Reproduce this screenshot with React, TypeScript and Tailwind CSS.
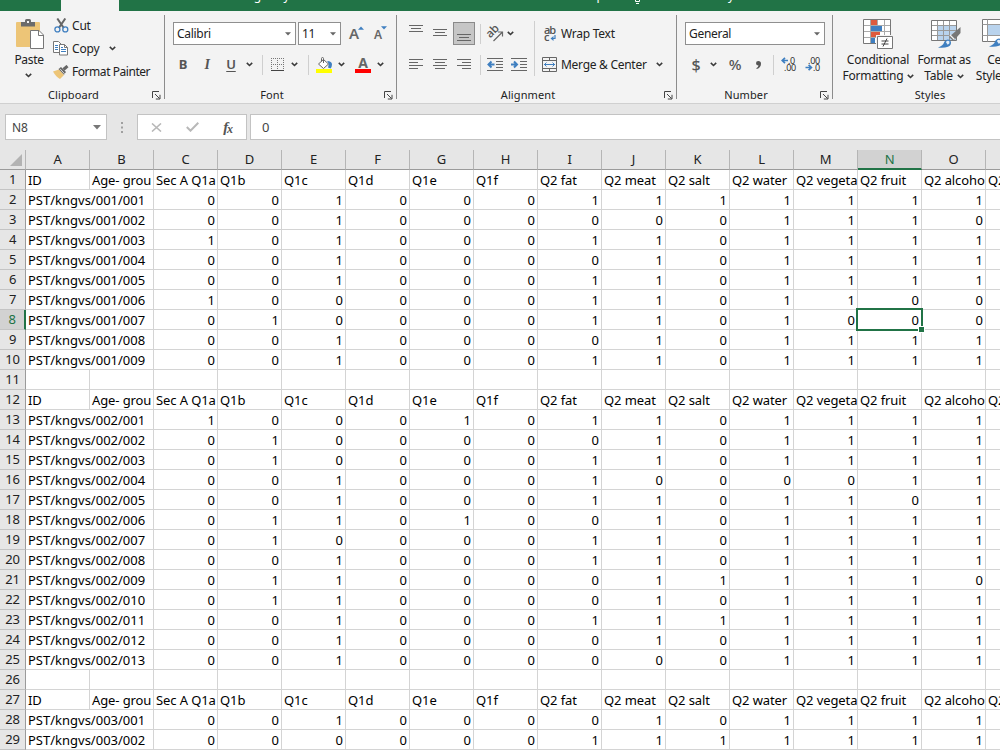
import type { ReactNode } from 'react';

const COLUMNS = ['A', 'B', 'C', 'D', 'E', 'F', 'G', 'H', 'I', 'J', 'K', 'L', 'M', 'N', 'O', 'P'];

const HEADINGS = [
  'ID', 'Age- grou', 'Sec A Q1a', 'Q1b', 'Q1c', 'Q1d', 'Q1e', 'Q1f',
  'Q2 fat', 'Q2 meat', 'Q2 salt', 'Q2 water', 'Q2 vegeta', 'Q2 fruit', 'Q2 alcoho', 'Q2',
];

type SheetRow =
  | { kind: 'heading' }
  | { kind: 'blank' }
  | { kind: 'data'; id: string; answers: string };

const heading: SheetRow = { kind: 'heading' };
const blank: SheetRow = { kind: 'blank' };

/** Builds the numbered rows of one village; each string holds the answers for C to O. */
function block(village: string, answers: string[]): SheetRow[] {
  return answers.map((a, i) => ({
    kind: 'data',
    id: `PST/kngvs/${village}/${String(i + 1).padStart(3, '0')}`,
    answers: a,
  }));
}

const ROWS: SheetRow[] = [
  heading,
  ...block('001', [
    '0010001111111',
    '0010000001110',
    '1010001101111',
    '0010000101111',
    '0010001101111',
    '1000001101100',
    '0100001101000',
    '0010000101111',
    '0010001101111',
  ]),
  blank,
  heading,
  ...block('002', [
    '1000101101111',
    '0100000101111',
    '0100001101111',
    '0010001000011',
    '0010001101101',
    '0110100101111',
    '0100001101111',
    '0010001101111',
    '0110000111110',
    '0110000101111',
    '0010001111111',
    '0010000101111',
    '0010000001111',
  ]),
  blank,
  heading,
  ...block('003', ['0010000101111', '0000001111111']),
];

const ACTIVE_COLUMN = 13;
const ACTIVE_ROW = 8;

function Chevron(): JSX.Element {
  return (
    <svg width="7" height="5" viewBox="0 0 7 5" fill="none" stroke="#3a3a3a" strokeWidth="1.6">
      <path d="M0.8 0.9 3.5 3.5 6.2 0.9" />
    </svg>
  );
}

function Triangle({ className = 'fill-[#666]' }: { className?: string }): JSX.Element {
  return (
    <svg className={className} width="6" height="4" viewBox="0 0 6 4">
      <path d="M0 0.3h6L3 3.6z" />
    </svg>
  );
}

function Launcher(): JSX.Element {
  return (
    <svg width="9" height="9" viewBox="0 0 9 9" fill="none" stroke="#444">
      <path d="M0.5 7V0.5H7M3 3l4.5 4.5M8 3.8V8H3.8" />
    </svg>
  );
}

/** Paragraph-style lines, given as [x1, x2, y]. */
function Lines({ rows }: { rows: number[][] }): JSX.Element {
  return (
    <svg width="14" height="23" viewBox="0 0 14 23" stroke="#666">
      {rows.map(([x1, x2, y]) => (
        <path key={y} d={`M${x1} ${y}H${x2}`} />
      ))}
    </svg>
  );
}

function PasteIcon(): JSX.Element {
  return (
    <svg width="29" height="31" viewBox="0 0 29 31">
      <rect x="0" y="3" width="24" height="25" rx="1" fill="#edc577" />
      <path d="M5 3h4V1.6Q9 0 10.5 0h3Q15 0 15 1.6V3h4v4.5H5z" fill="#6b6b6b" />
      <rect x="11" y="2" width="2" height="2" fill="#f3f3f3" />
      <path d="M14.5 11.5h8.500l4.500 4.500v13.500h-13z" fill="#fff" stroke="#777" />
      <path d="M22.5 11.5v5h5" fill="none" stroke="#777" />
    </svg>
  );
}

function CutIcon(): JSX.Element {
  return (
    <svg width="15" height="15" viewBox="0 0 15 15" fill="none">
      <path d="M3.3 0.5 9.8 10M11.3 0.5 4.8 10" stroke="#666" strokeWidth="2" />
      <circle cx="3.4" cy="11.4" r="2.500" stroke="#3f7fc0" strokeWidth="1.3" />
      <circle cx="11.3" cy="11.4" r="2.500" stroke="#3f7fc0" strokeWidth="1.3" />
    </svg>
  );
}

function CopyIcon(): JSX.Element {
  return (
    <svg width="15" height="15" viewBox="0 0 15 15" fill="#fff" stroke="#777">
      <path d="M0.5 0.5h5l2.500 2.500v8.500H0.5z" />
      <path d="M2 4.5h3M2 6.5h3M2 8.5h3" stroke="#3f7fc0" />
      <path d="M6.5 3.5h5l3 3v7.500h-8z" />
      <path d="M11.5 3.5v3h3" fill="none" />
      <path d="M8 8.5h5M8 10.5h5M8 6.5h2" stroke="#3f7fc0" />
    </svg>
  );
}

function BrushIcon(): JSX.Element {
  return (
    <svg width="16" height="14" viewBox="0 0 16 14">
      <path d="M0 6.5 6 4.5l5 5.500-4 4Q3 12 0 6.5z" fill="#edc577" />
      <path d="M5.5 4 8 2l5 5-2 2.800z" fill="#666" />
      <path d="m10.5 4.5 4-3.500" stroke="#666" strokeWidth="3" />
      <path d="m7 3.8 4.600 5" stroke="#f3f3f3" strokeWidth=".8" />
    </svg>
  );
}

function FillIcon(): JSX.Element {
  return (
    <svg width="16" height="16" viewBox="0 0 16 16" fill="none">
      <path d="M11 4q5 0 5 3.500 0 2-1.500 4l-2.500-1q1.500-4-1-6.500z" fill="#3f7fc0" />
      <path d="m2.500 7 5-4.500 5 4.500-5 4.500z" fill="#fff" stroke="#666" />
      <path d="M5.500 4.500v-3q0-1 1-1t1 1V6" stroke="#666" />
      <rect y="12" width="16" height="4" fill="#ff0" />
    </svg>
  );
}

function BordersIcon(): JSX.Element {
  return (
    <svg width="13" height="13" viewBox="0 0 13 13" stroke="#777">
      <path d="M0 .5h13M0 6.5h13M.5 0v12M6.5 0v12M12.5 0v12" strokeDasharray="1 1" />
      <path d="M0 12.5h13" stroke="#444" />
    </svg>
  );
}

function OrientationIcon(): JSX.Element {
  return (
    <svg width="18" height="16" viewBox="0 0 18 16">
      <text
        x="2"
        y="11"
        transform="rotate(-45 5 9)"
        fontFamily="Open Sans, sans-serif"
        fontSize="11.5"
        fontWeight="600"
        fill="#555"
      >
        ab
      </text>
      <path d="M7.500 15 16 6.500M12 6h4.500v4.500" stroke="#666" strokeWidth="1.2" fill="none" />
    </svg>
  );
}

function IndentIcon({ outward = false }: { outward?: boolean }): JSX.Element {
  return (
    <svg width="16" height="13" viewBox="0 0 16 13" fill="none">
      <path d="M0 .5h16M9 3.500h7M9 6.500h7M9 9.500h7M0 12.500h16" stroke="#666" />
      {outward ? (
        <path d="M7.500 6.500H2M4.500 3.500l-3 3 3 3" stroke="#3f7fc0" strokeWidth="2" />
      ) : (
        <path d="M0 6.500h5M3 3.500l3 3-3 3" stroke="#3f7fc0" strokeWidth="2" />
      )}
    </svg>
  );
}

function WrapIcon(): JSX.Element {
  return (
    <svg width="13" height="17" viewBox="0 0 13 17" fontFamily="Open Sans, sans-serif" fontSize="11" fontWeight="600">
      <text x="0" y="8.500" fill="#555" textLength="12">ab</text>
      <text x="0" y="15.500" fill="#555">c</text>
      <path d="M11 10v3.500H8.500" stroke="#3f7fc0" strokeWidth="1.2" fill="none" />
      <path d="M9.500 11v5l-3-2.500z" fill="#3f7fc0" />
    </svg>
  );
}

function MergeIcon(): JSX.Element {
  return (
    <svg width="15" height="15" viewBox="0 0 15 15" fill="none" stroke="#666">
      <path d="M.5.5h14v14H.5zM.5 3.500h14M.5 11.500h14M7.500.5v3M7.500 11.500v3" />
      <path d="M2 7.500h11M4.500 5.500l-2 2 2 2M10.500 5.500l2 2-2 2" stroke="#3f7fc0" />
    </svg>
  );
}

function DecimalIcon({ increase = false }: { increase?: boolean }): JSX.Element {
  return (
    <svg width="16" height="15" viewBox="0 0 16 15" fontFamily="Open Sans, sans-serif" fontSize="9" fill="#222">
      <text x={increase ? 7 : 3} y="6.700" textLength={increase ? 7 : 12}>{increase ? '.0' : '.00'}</text>
      <text x={increase ? 3 : 8} y="13.700" textLength={increase ? 12 : 7}>{increase ? '.00' : '.0'}</text>
      {increase ? (
        <path d="M7 3.500H1.500M4 .8 1.200 3.500 4 6.200" fill="none" stroke="#3f7fc0" strokeWidth="1.7" />
      ) : (
        <path d="M.5 10.500H6M3.600 7.800l2.800 2.700-2.800 2.700" fill="none" stroke="#3f7fc0" strokeWidth="1.7" />
      )}
    </svg>
  );
}

function ConditionalIcon(): JSX.Element {
  return (
    <svg width="30" height="30" viewBox="0 0 30 30">
      <path d="M.5.500h27v24H.5z" fill="#fff" />
      <path d="M.5 6.500h27M.5 12.500h27M.5 18.500h27M7.500.5v24M14.500.5v24M21.500.5v24" stroke="#aaa" />
      <path d="M8 1h6v5H8zM8 13h9v5H8z" fill="#dd5b3d" />
      <path d="M8 7h11v5H8zM8 19h4v5H8z" fill="#3f7fc0" />
      <path d="M.5.500h27v24H.5z" fill="none" stroke="#777" />
      <path d="M13 16h17v14H13z" fill="#f3f3f3" />
      <path d="M14.500 17.500h15v12h-15z" fill="#fff" stroke="#777" />
      <path d="M18.500 22h7M18.500 25h7M24 19.500l-4 8" stroke="#444" />
    </svg>
  );
}

/** The large paint brush that lies over the table and cell pictures. */
function PaintTip(): JSX.Element {
  return (
    <>
      <path d="M29.500 7v6l-7 8-4.500-4z" fill="#777" />
      <path d="m19 15 4.500 4.500" stroke="#f3f3f3" strokeWidth="1.3" />
      <path d="M7 27.500q5-1.500 6.500-6 3-3.500 6-.8 1.800 4-2.500 6-4 1.500-10 .8z" fill="#3f7fc0" />
      <path d="M14.800 22q2-2 3.700-.5.500 2.300-1.800 3.300z" fill="#e4eef8" />
    </>
  );
}

function TableBrushIcon(): JSX.Element {
  return (
    <svg width="30" height="29" viewBox="0 0 30 29">
      <path d="M.5.500h25v20H.5z" fill="#fff" />
      <path d="M7 6h18v14H7z" fill="#b9d3ed" />
      <path d="M.5 5.500h25M.5 10.500h25M.5 15.500h25M6.500.5v20M12.500.5v20M18.500.5v20" stroke="#999" />
      <path d="M.5.500h25v20H.5z" fill="none" stroke="#777" />
      <PaintTip />
    </svg>
  );
}

function CellStylesIcon(): JSX.Element {
  return (
    <svg width="30" height="30" viewBox="0 0 30 30">
      <path d="M.5.500h28v22H.5z" fill="#fff" stroke="#777" />
      <path d="M.5 5.500h28M.5 16.500h28M5.500.5v22" stroke="#999" />
      <path d="M6 6h18v10H6z" fill="#b9d3ed" />
      <PaintTip />
    </svg>
  );
}

function Slot({ className, children }: { className: string; children?: ReactNode }): JSX.Element {
  return <div className={`flex shrink-0 items-center justify-center ${className}`}>{children}</div>;
}

function Rule({ className = 'h-5' }: { className?: string }): JSX.Element {
  return <div className={`w-px shrink-0 bg-[#cfcfcf] ${className}`} />;
}

interface ComboProps {
  value: string;
  className: string;
}

function Combo({ value, className }: ComboProps): JSX.Element {
  return (
    <div className={`flex h-[23px] shrink-0 items-center justify-between border border-[#8f8f8f] bg-white pr-1 pl-[3px] text-[12px] ${className}`}>
      <span className="tracking-[-0.3px]">{value}</span>
      <Triangle />
    </div>
  );
}

interface GroupProps {
  label: string;
  className: string;
  launcher?: boolean;
  children: ReactNode;
}

/** One ribbon group: its controls on top, the caption and launcher below. */
function Group({ label, className, launcher = true, children }: GroupProps): JSX.Element {
  return (
    <section className={`flex shrink-0 flex-col ${className}`}>
      <div className="h-[76px]">{children}</div>
      <div className="flex h-4 items-center pr-[3px]">
        <span className="flex-1 pr-[5px] text-center text-[11px] tracking-[0.1px]">{label}</span>
        {launcher ? <Launcher /> : null}
      </div>
    </section>
  );
}

function GroupRule(): JSX.Element {
  return <div className="mt-1 h-[84px] w-px shrink-0 bg-[#8c8c8c]" />;
}

function TabStrip(): JSX.Element {
  return (
    <div className="flex h-[11px] overflow-hidden bg-[#217346] text-[12px] leading-[16px] whitespace-nowrap text-white">
      <div className="ml-[61px] h-full w-[58px] bg-[#f3f3f3]" />
      <span className="-mt-[12px] ml-[121px] w-[338px] tracking-[-0.1px]">Page Layout</span>
      <span className="-mt-[12px] w-[56px] tracking-[-0.1px]">Help</span>
      <svg width="8" height="5" viewBox="0 0 8 5" stroke="#fff" fill="none">
        <path d="M1.500 0v1.500h4V0M2 3.500h3" />
      </svg>
      <span className="-mt-[12px] ml-[12px] tracking-[0px]">Tell me what you want to do</span>
    </div>
  );
}

function Ribbon(): JSX.Element {
  return (
    <div className="flex h-[93px] overflow-hidden border-b border-[#d0d0d0] bg-[#f3f3f3]">
      <Group label="Clipboard" className="w-[164px]">
        <div className="flex">
          <div className="flex w-[53px] flex-col items-center pt-2 pl-[5px]">
            <div className="pl-[3px]"><PasteIcon /></div>
            <span className="mt-[2px] leading-4 tracking-[-0.35px]">Paste</span>
            <div className="mt-[5px] pr-[2px]"><Chevron /></div>
          </div>
          <div className="flex flex-col pt-[3px]">
            <div className="flex h-[23px] items-center gap-[3px] pl-px"><CutIcon /><span>Cut</span></div>
            <div className="flex h-[23px] items-center gap-1">
              <CopyIcon /><span>Copy</span><span className="ml-[6px]"><Chevron /></span>
            </div>
            <div className="flex h-[23px] items-center gap-[3px]">
              <BrushIcon /><span className="tracking-[-0.45px]">Format Painter</span>
            </div>
          </div>
        </div>
      </Group>
      <GroupRule />

      <Group label="Font" className="w-[231px]">
        <div className="flex h-[45px] items-center pl-2">
          <Combo value="Calibri" className="w-[123px]" />
          <Combo value="11" className="ml-[2px] w-[43px]" />
          <span className="ml-2 text-[15px] font-semibold text-[#666]">A</span>
          <Triangle className="mb-3 -ml-px rotate-180 fill-[#3f7fc0]" />
          <span className="ml-[10px] pt-[2px] text-[12px] font-semibold text-[#666]">A</span>
          <Triangle className="mb-3 -ml-px fill-[#3f7fc0]" />
        </div>
        <div className="flex h-[17px] items-center pl-[6px] text-[13px] text-[#555]">
          <Slot className="w-6 font-bold">B</Slot>
          <Slot className="w-6 font-['Liberation_Serif'] text-[14px] font-bold italic">I</Slot>
          <Slot className="w-6 font-semibold underline underline-offset-2">U</Slot>
          <Slot className="w-3"><Chevron /></Slot>
          <Slot className="w-[14px]"><Rule /></Slot>
          <Slot className="w-[16px]"><BordersIcon /></Slot>
          <Slot className="w-[18px]"><Chevron /></Slot>
          <Slot className="w-[10px]"><Rule /></Slot>
          <Slot className="w-[22px]"><FillIcon /></Slot>
          <Slot className="w-3"><Chevron /></Slot>
          <div className="ml-[8px] flex h-4 w-4 items-center justify-center border-b-4 border-[#f00] text-[14px] font-bold text-[#666]">A</div>
          <Slot className="ml-[2px] w-[14px]"><Chevron /></Slot>
        </div>
      </Group>
      <GroupRule />

      <Group label="Alignment" className="w-[279px]">
        <div className="flex">
          <div className="w-[137px] pl-[7px]">
            <div className="flex h-[45px] items-center">
              <Slot className="w-6"><Lines rows={[[0, 14, 3.5], [2, 12, 6.5], [0, 14, 9.5]]} /></Slot>
              <Slot className="w-6"><Lines rows={[[0, 14, 7.5], [2, 12, 10.5], [0, 14, 13.5]]} /></Slot>
              <Slot className="w-6">
                <div className="flex h-[23px] w-[22px] items-center justify-center border border-[#8a8a8a] bg-[#c6c6c6]">
                  <Lines rows={[[0, 14, 12.5], [2, 12, 15.5], [0, 14, 18.5]]} />
                </div>
              </Slot>
              <Slot className="w-2"><Rule /></Slot>
              <Slot className="w-[22px]"><OrientationIcon /></Slot>
              <Slot className="w-2"><Chevron /></Slot>
            </div>
            <div className="flex h-[17px] items-center">
              <Slot className="w-6"><Lines rows={[[0, 14, 6.5], [0, 9, 9.5], [0, 14, 12.5], [0, 9, 15.5]]} /></Slot>
              <Slot className="w-6"><Lines rows={[[0, 14, 6.5], [2, 12, 9.5], [0, 14, 12.5], [2, 12, 15.5]]} /></Slot>
              <Slot className="w-6"><Lines rows={[[0, 14, 6.5], [5, 14, 9.5], [0, 14, 12.5], [5, 14, 15.5]]} /></Slot>
              <Slot className="w-2"><Rule /></Slot>
              <Slot className="w-[22px]"><IndentIcon outward /></Slot>
              <Slot className="w-[26px]"><IndentIcon /></Slot>
            </div>
          </div>
          <Rule className="mt-[10px] h-[55px]" />
          <div className="pl-[7px]">
            <div className="flex h-[45px] items-center gap-1 pl-[2px]">
              <WrapIcon /><span className="tracking-[-0.25px]">Wrap Text</span>
            </div>
            <div className="flex h-[17px] items-center gap-1">
              <MergeIcon /><span className="tracking-[-0.28px]">Merge &amp; Center</span>
              <span className="ml-[5px]"><Chevron /></span>
            </div>
          </div>
        </div>
      </Group>
      <GroupRule />

      <Group label="Number" className="w-[155px]">
        <div className="flex h-[45px] items-center pl-2"><Combo value="General" className="w-[140px]" /></div>
        <div className="flex h-[17px] items-center pl-2 text-[15px] text-[#555]">
          <Slot className="w-[22px] text-[16px] font-medium">$</Slot>
          <Slot className="w-3"><Chevron /></Slot>
          <Slot className="w-8 font-medium">%</Slot>
          <Slot className="w-[14px]">
            <svg width="5" height="8" viewBox="0 0 5 8" fill="#555">
              <path d="M2.300 0Q5 0 5 2.700 5 6.500.8 8L.3 7.200Q2.300 6.200 2.500 4.600 0 4.600 0 2.300 0 0 2.300 0z" />
            </svg>
          </Slot>
          <Slot className="w-4"><Rule /></Slot>
          <DecimalIcon increase />
          <Slot className="w-2" />
          <DecimalIcon />
        </div>
      </Group>
      <GroupRule />

      <Group label="Styles" className="w-[202px]" launcher={false}>
        <div className="flex pt-2 text-center leading-4">
          <div className="flex w-[90px] shrink-0 flex-col items-center">
            <div className="h-[33px]"><ConditionalIcon /></div>
            <span>Conditional</span>
            <span className="flex items-center gap-1 pl-px">Formatting <Chevron /></span>
          </div>
          <div className="flex w-[42px] shrink-0 flex-col items-center whitespace-nowrap">
            <div className="h-[33px] pt-px pl-1"><TableBrushIcon /></div>
            <span className="tracking-[-0.35px]">Format as</span>
            <span className="flex items-center gap-1">Table <Chevron /></span>
          </div>
          <div className="-ml-px flex w-[66px] shrink-0 flex-col items-center whitespace-nowrap">
            <div className="h-[33px]"><CellStylesIcon /></div>
            <span>Cell</span>
            <span className="flex items-center gap-1">Styles <Chevron /></span>
          </div>
        </div>
      </Group>
    </div>
  );
}

function FormulaBar(): JSX.Element {
  return (
    <div className="flex h-[46px] items-start pt-[10px] pl-[5px] text-[12px] text-[#444]">
      <div className="flex h-[26px] w-[102px] items-center justify-between border border-[#c3c3c3] bg-white pr-[5px] pl-[6px]">
        <span className="pt-px">N8</span>
        <svg width="8" height="5" viewBox="0 0 8 5" fill="#777"><path d="M0 0h8L4 4.500z" /></svg>
      </div>
      <Slot className="h-[26px] w-[30px]">
        <svg width="2" height="11" viewBox="0 0 2 11" fill="#a0a0a0">
          <path d="M0 0h2v2H0zM0 4.500h2v2H0zM0 9h2v2H0z" />
        </svg>
      </Slot>
      <div className="flex h-[26px] w-[110px] items-center border border-[#c3c3c3] bg-white">
        <Slot className="w-9">
          <svg width="11" height="9" viewBox="0 0 12 10" stroke="#b8b8b8" strokeWidth="1.7">
            <path d="m1 .5 10 9M11 .5l-10 9" />
          </svg>
        </Slot>
        <Slot className="w-9">
          <svg width="13" height="10" viewBox="0 0 13 10" fill="none" stroke="#b8b8b8" strokeWidth="2">
            <path d="m.8 5 3.700 3.700L12.300.8" />
          </svg>
        </Slot>
        <Slot className="w-9 font-['Liberation_Serif'] text-[15px] font-bold text-[#555] italic">
          f<span className="-ml-px pt-1 text-[12px]">x</span>
        </Slot>
      </div>
      <div className="ml-[3px] flex h-[26px] flex-1 items-center border border-r-0 border-[#c3c3c3] bg-white pt-px pl-[11px] text-[13px]">0</div>
    </div>
  );
}

function ColumnHeaders(): JSX.Element {
  return (
    <div className="flex h-5 text-[13px] text-[#222]">
      <div className="flex w-[26px] shrink-0 items-end justify-end border-r border-b border-r-[#b5b5b5] border-b-[#9b9b9b] pr-[3px] pb-[3px]">
        <svg width="12" height="12" viewBox="0 0 12 12" fill="#b3b3b3"><path d="M12 0v12H0z" /></svg>
      </div>
      {COLUMNS.map((name, i) => (
        <div
          key={name}
          className={`flex w-16 shrink-0 items-center justify-center border-r border-r-[#b5b5b5] ${
            i === ACTIVE_COLUMN
              ? 'border-b-2 border-b-[#217346] bg-[#d2d2d2] pt-px text-[#217346]'
              : 'border-b border-b-[#9b9b9b]'
          }`}
        >
          {name}
        </div>
      ))}
    </div>
  );
}

interface CellProps {
  text: string;
  className: string;
  active: boolean;
}

function Cell({ text, className, active }: CellProps): JSX.Element {
  return (
    <div
      className={`relative h-5 w-16 shrink-0 border-b border-[#d4d4d4] px-[2px] leading-[21px] whitespace-nowrap ${className} ${
        active ? 'z-10' : ''
      }`}
    >
      {text}
      {active ? (
        <div className="absolute -top-[2px] -left-[2px] h-[23px] w-[67px] border-2 border-[#217346]">
          <div className="absolute -right-[4px] -bottom-[4px] h-[7px] w-[7px] border border-white bg-[#217346]" />
        </div>
      ) : null}
    </div>
  );
}

function cellText(row: SheetRow, column: number): string {
  if (row.kind === 'heading') return HEADINGS[column];
  if (row.kind === 'blank') return '';
  if (column === 0) return row.id;
  return row.answers[column - 2] ?? '';
}

function cellClass(row: SheetRow, column: number): string {
  if (row.kind !== 'data') return 'overflow-hidden border-r tracking-[-0.1px]';
  // The id runs over the empty B cell, so A draws no right edge.
  if (column === 0) return 'z-10 tracking-[0px]';
  return 'border-r text-right tracking-[0px]';
}

function Sheet(): JSX.Element {
  return (
    <div>
      <ColumnHeaders />
      {ROWS.map((row, r) => (
        <div key={r} className="flex h-5 bg-white text-[13px] text-black">
          <div
            className={`flex w-[26px] shrink-0 items-center justify-center border-b border-b-[#c4c4c4] pt-px ${
              r + 1 === ACTIVE_ROW
                ? 'border-r-2 border-r-[#217346] bg-[#d2d2d2] text-[#217346]'
                : 'border-r border-r-[#9b9b9b] bg-[#e6e6e6] text-[#222]'
            }`}
          >
            {r + 1}
          </div>
          {COLUMNS.map((name, c) => (
            <Cell
              key={name}
              text={cellText(row, c)}
              className={cellClass(row, c)}
              active={r + 1 === ACTIVE_ROW && c === ACTIVE_COLUMN}
            />
          ))}
        </div>
      ))}
    </div>
  );
}

export default function App(): JSX.Element {
  return (
    <div className="h-[750px] w-[1000px] overflow-hidden bg-[#e6e6e6] font-['Noto_Sans','Open_Sans',sans-serif] text-[12px] tracking-[-0.2px] text-[#222]">
      <TabStrip />
      <Ribbon />
      <FormulaBar />
      <Sheet />
    </div>
  );
}
